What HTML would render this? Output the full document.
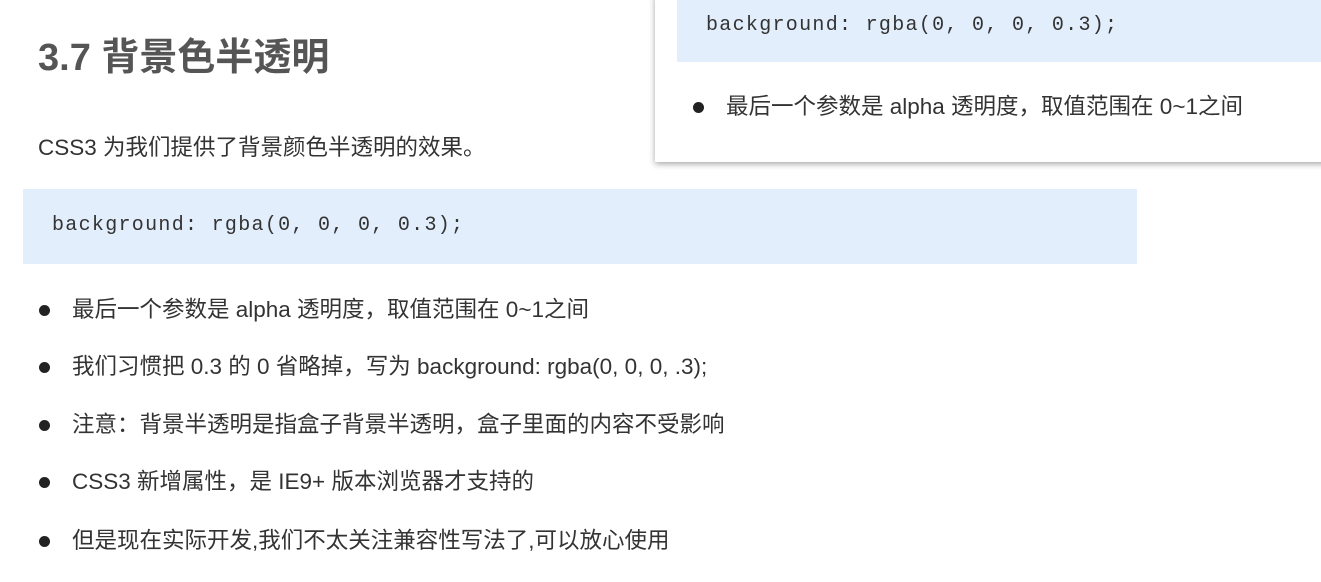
<!DOCTYPE html>
<html><head><meta charset="utf-8"><style>
body{margin:0;width:1321px;height:582px;background:#fff;position:relative;overflow:hidden;font-family:"Liberation Sans","Noto Sans CJK SC",sans-serif;color:#333}
.a{position:absolute;white-space:nowrap}
h1{position:absolute;left:38px;top:34px;margin:0;font-size:38px;font-weight:bold;color:#555;line-height:48px}
.p{font-size:22.5px;line-height:28px;color:#333}
.code{position:absolute;background:#e3eefc}
.mono{font-family:"Liberation Mono",monospace;font-size:20px;letter-spacing:1.3px;color:#333}
.dot{position:absolute;width:11px;height:11px;border-radius:50%;background:#222}
.pop{position:absolute;left:655px;top:-5px;width:680px;height:167px;background:#fff;box-shadow:0 2px 6px rgba(0,0,0,.35)}
</style></head><body>
<h1>3.7 背景色半透明</h1>
<div class="a p" style="left:38px;top:134px">CSS3 为我们提供了背景颜色半透明的效果。</div>
<div class="code" style="left:23px;top:189px;width:1114px;height:75px"></div>
<div class="a mono" style="left:52px;top:214px">background: rgba(0, 0, 0, 0.3);</div>
<div class="dot" style="left:39px;top:305px"></div><div class="a p" style="left:72px;top:296px">最后一个参数是 alpha 透明度，取值范围在 0~1之间</div>
<div class="dot" style="left:39px;top:362px"></div><div class="a p" style="left:72px;top:353px">我们习惯把 0.3 的 0 省略掉，写为 background: rgba(0, 0, 0, .3);</div>
<div class="dot" style="left:39px;top:420px"></div><div class="a p" style="left:72px;top:411px">注意：背景半透明是指盒子背景半透明，盒子里面的内容不受影响</div>
<div class="dot" style="left:39px;top:477px"></div><div class="a p" style="left:72px;top:468px">CSS3 新增属性，是 IE9+ 版本浏览器才支持的</div>
<div class="dot" style="left:39px;top:536px"></div><div class="a p" style="left:72px;top:527px">但是现在实际开发,我们不太关注兼容性写法了,可以放心使用</div>
<div class="pop"></div>
<div class="code" style="left:677px;top:0;width:644px;height:62px"></div>
<div class="a mono" style="left:706px;top:14px">background: rgba(0, 0, 0, 0.3);</div>
<div class="dot" style="left:693px;top:102px"></div><div class="a p" style="left:726px;top:93px">最后一个参数是 alpha 透明度，取值范围在 0~1之间</div>
</body></html>
